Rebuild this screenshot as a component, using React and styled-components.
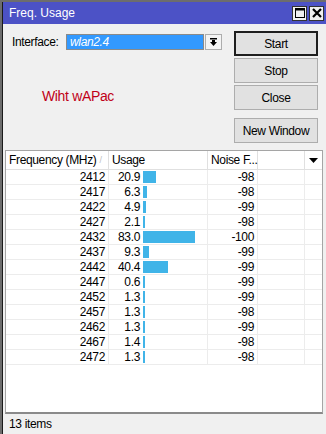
import React from 'react';
import styled, { createGlobalStyle } from 'styled-components';

const rows = [
  { freq: 2412, usage: 20.9, noise: -98 },
  { freq: 2417, usage: 6.3, noise: -98 },
  { freq: 2422, usage: 4.9, noise: -99 },
  { freq: 2427, usage: 2.1, noise: -98 },
  { freq: 2432, usage: 83.0, noise: -100 },
  { freq: 2437, usage: 9.3, noise: -99 },
  { freq: 2442, usage: 40.4, noise: -99 },
  { freq: 2447, usage: 0.6, noise: -99 },
  { freq: 2452, usage: 1.3, noise: -99 },
  { freq: 2457, usage: 1.3, noise: -98 },
  { freq: 2462, usage: 1.3, noise: -99 },
  { freq: 2467, usage: 1.4, noise: -98 },
  { freq: 2472, usage: 1.3, noise: -98 },
];

const cols = '103px 99px 50px 47px 1fr';

export default function App() {
  return (
    <>
      <GlobalStyle />
      <Window>
        <TitleBar>
          <span>Freq. Usage</span>
          <TitleButtons>
            <TitleButton>
              <svg width="10" height="10" viewBox="0 0 10 10">
                <rect x="0.5" y="0.5" width="9" height="9" fill="none" stroke="#000" />
                <rect x="0.5" y="0.5" width="9" height="2" fill="#000" />
              </svg>
            </TitleButton>
            <TitleButton>
              <svg width="10" height="10" viewBox="0 0 10 10">
                <path d="M1 1 L9 9 M9 1 L1 9" stroke="#000" strokeWidth="2.2" />
              </svg>
            </TitleButton>
          </TitleButtons>
        </TitleBar>
        <Body>
          <Top>
            <LeftPane>
              <FieldRow>
                <Label>Interface:</Label>
                <Select>wlan2.4</Select>
                <DropButton>
                  <svg width="9" height="9" viewBox="0 0 9 9">
                    <rect x="1" y="0" width="7" height="1.5" fill="#000" />
                    <path d="M3 2 H6 V4 H8 L4.5 8 L1 4 H3 Z" fill="#000" />
                  </svg>
                </DropButton>
              </FieldRow>
              <Note>Wiht wAPac</Note>
            </LeftPane>
            <Buttons>
              <Button primary>Start</Button>
              <Button>Stop</Button>
              <Button>Close</Button>
              <Button spaced>New Window</Button>
            </Buttons>
          </Top>
          <Table>
            <HeadRow>
              <HeadCell>
                Frequency (MHz) <SortMark>/</SortMark>
              </HeadCell>
              <HeadCell>Usage</HeadCell>
              <HeadCell>Noise F...</HeadCell>
              <HeadCell />
              <HeadCell last>
                <svg width="9" height="5" viewBox="0 0 9 5">
                  <path d="M0 0 H9 L4.5 5 Z" fill="#000" />
                </svg>
              </HeadCell>
            </HeadRow>
            {rows.map((r) => (
              <Row key={r.freq}>
                <Cell align="right">{r.freq}</Cell>
                <UsageCell>
                  <UsageValue>{r.usage.toFixed(1)}</UsageValue>
                  <Bar style={{ width: Math.max(2, Math.round(r.usage * 0.63)) }} />
                </UsageCell>
                <Cell align="right">{r.noise}</Cell>
                <Cell />
              </Row>
            ))}
          </Table>
          <StatusBar>13 items</StatusBar>
        </Body>
      </Window>
    </>
  );
}

const GlobalStyle = createGlobalStyle`
  html, body {
    margin: 0;
    padding: 0;
    background: #6d6d6d;
  }
  body {
    font-family: "Liberation Sans", Arial, sans-serif;
    font-size: 12px;
    letter-spacing: -0.35px;
  }
`;

const Window = styled.div`
  width: 324px;
  height: 432px;
  margin-top: 2px;
  margin-left: 2px;
  display: flex;
  flex-direction: column;
  background: #f0f0f0;
  border-left: 1px solid #1a1a1a;
  box-sizing: border-box;
  overflow: hidden;
`;

const TitleBar = styled.div`
  height: 22px;
  flex-shrink: 0;
  background: #4c52c6;
  color: #fff;
  display: flex;
  align-items: center;
  justify-content: space-between;
  padding: 0 2px 0 6px;
  font-size: 12px;
  letter-spacing: 0;
`;

const TitleButtons = styled.div`
  display: flex;
  gap: 2px;
`;

const TitleButton = styled.div`
  width: 15px;
  height: 15px;
  background: #f0f0f0;
  border: 1px solid #333;
  box-sizing: border-box;
  display: flex;
  align-items: center;
  justify-content: center;
`;

const Body = styled.div`
  flex: 1;
  display: flex;
  flex-direction: column;
  min-height: 0;
`;

const Top = styled.div`
  display: flex;
  justify-content: space-between;
  padding: 7px 8px 0 9px;
  height: 115px;
  flex-shrink: 0;
`;

const LeftPane = styled.div`
  display: flex;
  flex-direction: column;
`;

const FieldRow = styled.div`
  display: flex;
  align-items: center;
  margin-top: 3px;
`;

const Label = styled.span`
  color: #000;
  width: 54px;
`;

const Select = styled.div`
  width: 138px;
  height: 16px;
  box-sizing: border-box;
  background: #3399ff;
  border: 1px solid #8a8a8a;
  color: #fff;
  font-style: italic;
  padding-left: 3px;
  line-height: 14px;
`;

const DropButton = styled.div`
  width: 17px;
  height: 16px;
  margin-left: 1px;
  box-sizing: border-box;
  border: 1px solid #adadad;
  background: #f4f4f4;
  display: flex;
  align-items: center;
  justify-content: center;
`;

const Note = styled.div`
  color: #c00018;
  font-size: 14px;
  margin: 38px 0 0 30px;
`;

const Buttons = styled.div`
  display: flex;
  flex-direction: column;
  gap: 2px;
`;

const Button = styled.div`
  width: 84px;
  height: 25px;
  box-sizing: border-box;
  border: ${(p) => (p.primary ? '2px solid #1e1e1e' : '1px solid #adadad')};
  background: #e1e1e1;
  display: flex;
  align-items: center;
  justify-content: center;
  margin-top: ${(p) => (p.spaced ? '6px' : '0')};
`;

const Table = styled.div`
  flex: 1;
  margin: 4px 3px 0 2px;
  background: #fff;
  border: 1px solid #a5a5a5;
  border-bottom: 2px solid #8a8a8a;
`;

const HeadRow = styled.div`
  display: grid;
  grid-template-columns: ${cols};
  height: 18px;
  border-bottom: 1px solid #e0e0e0;
`;

const HeadCell = styled.div`
  border-right: ${(p) => (p.last ? 'none' : '1px solid #e0e0e0')};
  padding-left: ${(p) => (p.last ? '0' : '3px')};
  display: flex;
  align-items: center;
  justify-content: ${(p) => (p.last ? 'center' : 'flex-start')};
  color: #000;
  white-space: nowrap;
  overflow: visible;
`;

const SortMark = styled.span`
  color: #c0c0c0;
  font-size: 9px;
  margin-left: 3px;
`;

const Row = styled.div`
  display: grid;
  grid-template-columns: 103px 99px 50px 47px;
  height: 15px;
  box-sizing: border-box;
  border-bottom: 1px solid #ececec;
`;

const Cell = styled.div`
  border-right: 1px solid #ececec;
  text-align: ${(p) => p.align || 'left'};
  padding-right: 3px;
  line-height: 14px;
  color: #000;
`;

const UsageCell = styled.div`
  border-right: 1px solid #ececec;
  display: flex;
  align-items: center;
`;

const UsageValue = styled.span`
  width: 31px;
  text-align: right;
  line-height: 14px;
`;

const Bar = styled.div`
  height: 12px;
  margin-left: 3px;
  background: #40b4e8;
`;

const StatusBar = styled.div`
  height: 20px;
  flex-shrink: 0;
  padding-left: 6px;
  display: flex;
  align-items: center;
  color: #000;
`;
